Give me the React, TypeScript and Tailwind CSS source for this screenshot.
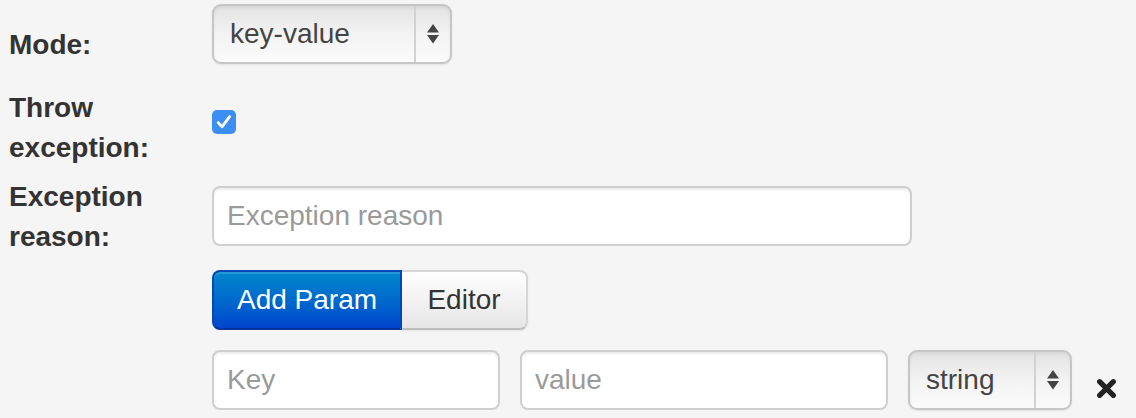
const Arrows: React.FC = () => (
  <svg width="12" height="20" viewBox="0 0 12 20" className="text-[#444]">
    <polygon points="6,0 12,8.5 0,8.5" fill="currentColor" />
    <polygon points="0,11 12,11 6,19.5" fill="currentColor" />
  </svg>
);

const SelectBox: React.FC<{ value: string; width: string }> = ({ value, width }) => (
  <div
    className={`${width} h-[60px] flex border-2 border-[#c6c6c6] rounded-[9px] bg-gradient-to-b from-[#e3e3e3] via-[#f3f3f3] to-[#fbfbfb] shadow-[inset_0_2px_3px_rgba(0,0,0,0.06),0_1px_2px_rgba(0,0,0,0.08)] text-[#444]`}
  >
    <div className="flex-1 flex items-center pl-[16px]">{value}</div>
    <div className="w-[36px] border-l-2 border-[#d2d2d2] flex items-center justify-center">
      <Arrows />
    </div>
  </div>
);

const inputCls =
  'h-[60px] border-2 border-[#cfcfcf] rounded-[8px] bg-white px-[13px] text-[#555] placeholder:text-[#9a9a9a] outline-none shadow-[inset_0_2px_2px_rgba(0,0,0,0.075)]';

const App: React.FC = () => {
  return (
    <div className="min-h-[418px] w-[1136px] bg-[#f5f5f5] pt-[4px] pl-[9px] font-['Liberation_Sans',Arial,sans-serif] text-[28px] leading-[40px] text-[#333]">
      {/* mode */}
      <div className="flex items-start">
        <label className="w-[203px] pt-[21px] font-bold">Mode:</label>
        <SelectBox value="key-value" width="w-[240px]" />
      </div>

      {/* throw exception */}
      <div className="flex items-start mt-[23px]">
        <label className="w-[203px] font-bold">
          Throw
          <br />
          exception:
        </label>
        <div className="mt-[22px] w-[24px] h-[24px] rounded-[5px] bg-[#3b8ef4] flex items-center justify-center">
          <svg width="24" height="24" viewBox="0 0 24 24">
            <path d="M6.2 12.6 L10 16.8 L17.6 6.6" stroke="white" strokeWidth="2.8" fill="none" strokeLinecap="round" strokeLinejoin="round" />
          </svg>
        </div>
      </div>

      {/* exception reason */}
      <div className="flex items-start mt-[9px]">
        <label className="w-[203px] font-bold">
          Exception
          <br />
          reason:
        </label>
        <input className={`${inputCls} w-[700px] mt-[9px]`} placeholder="Exception reason" />
      </div>

      {/* buttons */}
      <div className="flex mt-[13px] ml-[203px]">
        <button className="w-[190px] h-[60px] rounded-l-[8px] text-white bg-gradient-to-b from-[#0088cc] to-[#0044cc] border-2 border-[#0047b8] border-b-[#00349a] shadow-[inset_0_2px_0_rgba(255,255,255,0.15)]">
          Add Param
        </button>
        <button className="w-[126px] h-[60px] rounded-r-[8px] text-[#333] bg-gradient-to-b from-white to-[#e6e6e6] border-2 border-l-0 border-[#d6d6d6] border-b-[#bdbdbd] shadow-[0_1px_2px_rgba(0,0,0,0.08)]">
          Editor
        </button>
      </div>

      {/* key / value row */}
      <div className="flex items-start mt-[20px] ml-[203px]">
        <input className={`${inputCls} w-[288px]`} placeholder="Key" />
        <input className={`${inputCls} w-[368px] ml-[20px]`} placeholder="value" />
        <div className="ml-[20px]">
          <SelectBox value="string" width="w-[164px]" />
        </div>
        <svg width="21" height="21" viewBox="0 0 20 20" className="ml-[24px] mt-[28px]">
          <path d="M3.5 3.5 L16.5 16.5 M16.5 3.5 L3.5 16.5" stroke="#222" strokeWidth="5" strokeLinecap="round" />
        </svg>
      </div>
    </div>
  );
};

export default App;
